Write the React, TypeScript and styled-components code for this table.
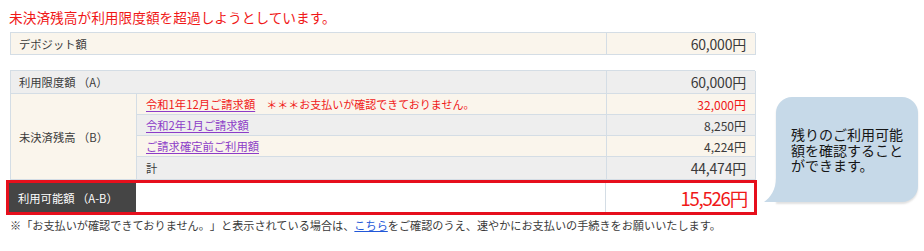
import React from "react";
import styled, { createGlobalStyle } from "styled-components";

const GlobalStyle = createGlobalStyle`
  html, body { margin: 0; padding: 0; background: #ffffff; }
  body { font-family: "Noto Sans CJK JP", "Noto Sans", sans-serif; color: #333333; text-spacing-trim: space-all; }
  * { box-sizing: border-box; }
`;

const Page = styled.div`
  display: flex;
  align-items: flex-start;
  width: 924px;
  height: 251px;
  overflow: hidden;
`;

const Main = styled.div`
  width: 745px;
  margin-left: 10px;
  display: flex;
  flex-direction: column;
`;

const Title = styled.h1`
  margin: 7px 0 5px -1px;
  font-size: 13.7px;
  line-height: 20px;
  font-weight: 400;
  color: #f01818;
  white-space: nowrap;
`;

const Grid = styled.div<{ $rows: string; $mt?: number }>`
  display: grid;
  grid-template-columns: 126px 470px 149px;
  grid-template-rows: ${(p) => p.$rows};
  border-top: 1px solid #d4dde5;
  border-left: 1px solid #d4dde5;
  margin-top: ${(p) => p.$mt ?? 0}px;
`;

type Tone = "cream" | "gray" | "white";
const toneColor: Record<Tone, string> = {
  cream: "#faf5ec",
  gray: "#eeeeee",
  white: "#ffffff",
};

const Cell = styled.div<{ $tone: Tone; $span?: number; $rowSpan?: number }>`
  display: flex;
  align-items: center;
  background: ${(p) => toneColor[p.$tone]};
  border-right: 1px solid #d4dde5;
  border-bottom: 1px solid #d4dde5;
  grid-column: span ${(p) => p.$span ?? 1};
  grid-row: span ${(p) => p.$rowSpan ?? 1};
  white-space: nowrap;
`;

const Label = styled(Cell)`
  padding-left: 8px;
  font-size: 11.3px;
  color: #3a3a3a;
`;

const Detail = styled(Cell)`
  padding-left: 9px;
  font-size: 11.3px;
  color: #3a3a3a;
`;

const Value = styled(Cell)<{ $size: number; $red?: boolean }>`
  justify-content: flex-end;
  padding-right: 9px;
  font-size: ${(p) => p.$size}px;
  color: ${(p) => (p.$red ? "#f01818" : "#3a3a3a")};
  letter-spacing: ${(p) => (p.$size > 13 ? "-0.2px" : "0")};
`;

const BillLink = styled.a<{ $alert?: boolean }>`
  color: ${(p) => (p.$alert ? "#f01818" : "#8c3cc8")};
  text-decoration: underline;
  text-decoration-color: #8c3cc8;
  text-underline-offset: 2px;
  font-size: 11.3px;
  cursor: pointer;
`;

const Alert = styled.span`
  color: #f01818;
  font-size: 11px;
`;

const ResultBox = styled.div`
  display: grid;
  grid-template-columns: 127px 470px 148px;
  height: 35px;
  width: 751px;
  margin-left: -4px;
  border: 3px solid #e60f1c;
  background: #ffffff;
`;

const DarkLabel = styled.div`
  display: flex;
  align-items: center;
  padding-left: 9px;
  background: #454545;
  color: #ffffff;
  font-size: 11.3px;
  white-space: nowrap;
`;

const Blank = styled.div`
  border-right: 1px solid #d4dde5;
`;

const ResultValue = styled.div`
  display: flex;
  align-items: center;
  justify-content: flex-end;
  padding-right: 7px;
  font-size: 18.5px;
  letter-spacing: -1.2px;
  color: #f01818;
`;

const Note = styled.p`
  margin: 2px 0 0 0;
  font-size: 11.15px;
  line-height: 16px;
  color: #3a3a3a;
  white-space: nowrap;
`;

const NoteLink = styled.a`
  color: #2258d8;
  text-decoration: underline;
  cursor: pointer;
`;

const Bubble = styled.div`
  position: relative;
  margin-top: 97px;
  margin-left: 21px;
  width: 142px;
  height: 105px;
  padding: 30px 0 0 15px;
  background: #c6d9e8;
  border-radius: 16px 16px 16px 0;
  box-shadow: 0 2px 2px rgba(0, 0, 0, 0.12);
  font-size: 14px;
  line-height: 15.5px;
  color: #161616;
`;

const BubbleLine = styled.span`
  display: block;
  height: 15.5px;
  white-space: nowrap;
`;

const Tail = styled.svg`
  position: absolute;
  left: -12px;
  bottom: 0;
  width: 12px;
  height: 24px;
`;

export default function App() {
  return (
    <>
      <GlobalStyle />
      <Page>
        <Main>
          <Title>未決済残高が利用限度額を超過しようとしています。</Title>

          <Grid $rows="22px">
            <Label $tone="cream" $span={2}>デポジット額</Label>
            <Value $tone="cream" $size={14}>60,000円</Value>
          </Grid>

          <Grid $rows="23px 21px 21px 21px 23px" $mt={15}>
            <Label $tone="gray" $span={2}>利用限度額 （A）</Label>
            <Value $tone="gray" $size={14}>60,000円</Value>

            <Label $tone="cream" $rowSpan={4}>未決済残高 （B）</Label>
            <Detail $tone="cream">
              <BillLink $alert>令和1年12月ご請求額</BillLink>
              <Alert>　＊＊＊お支払いが確認できておりません。</Alert>
            </Detail>
            <Value $tone="cream" $size={12} $red>32,000円</Value>

            <Detail $tone="gray">
              <BillLink>令和2年1月ご請求額</BillLink>
            </Detail>
            <Value $tone="gray" $size={12}>8,250円</Value>

            <Detail $tone="cream">
              <BillLink>ご請求確定前ご利用額</BillLink>
            </Detail>
            <Value $tone="cream" $size={12}>4,224円</Value>

            <Detail $tone="gray">計</Detail>
            <Value $tone="gray" $size={14}>44,474円</Value>
          </Grid>

          <ResultBox>
            <DarkLabel>利用可能額 （A-B）</DarkLabel>
            <Blank />
            <ResultValue>15,526円</ResultValue>
          </ResultBox>

          <Note>
            ※「お支払いが確認できておりません。」と表示されている場合は、
            <NoteLink>こちら</NoteLink>
            をご確認のうえ、速やかにお支払いの手続きをお願いいたします。
          </Note>
        </Main>

        <Bubble>
          <BubbleLine>残りのご利用可能</BubbleLine>
          <BubbleLine>額を確認すること</BubbleLine>
          <BubbleLine>ができます。</BubbleLine>
          <Tail viewBox="0 0 12 24" aria-hidden="true">
            <path d="M12 0 C12 12 6 20 0 24 L12 24 Z" fill="#c6d9e8" />
          </Tail>
        </Bubble>
      </Page>
    </>
  );
}
